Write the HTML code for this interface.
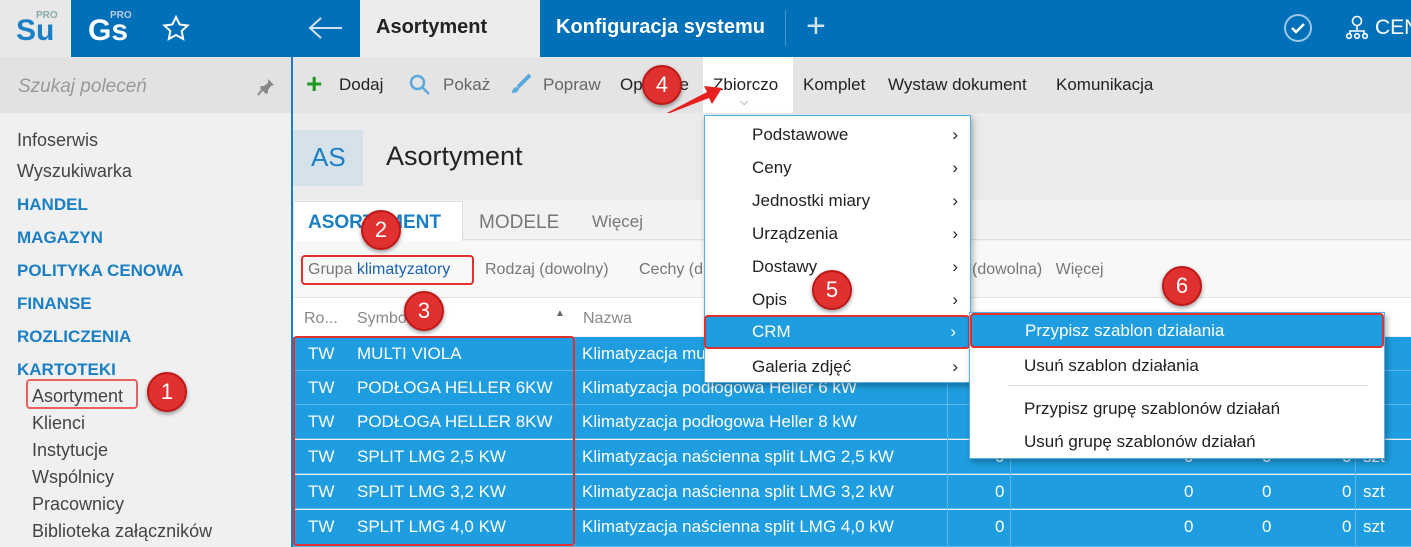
<!DOCTYPE html>
<html><head><meta charset="utf-8"><style>
*{margin:0;padding:0;box-sizing:border-box}
body{width:1411px;height:547px;overflow:hidden;position:relative;font-family:"Liberation Sans",sans-serif;font-size:17px;color:#222;background:#f0f0f0}
.a{position:absolute;white-space:nowrap}
.blue{color:#1a7fc4;font-weight:bold}
.badge{position:absolute;width:40px;height:40px;border-radius:50%;background:#e03030;border:2px solid #c01818;color:#fff;font-size:22px;text-align:center;line-height:36px;box-shadow:0 2px 4px rgba(0,0,0,.4)}
.row{position:absolute;left:293px;width:1118px;height:34px;background:#1e9ee0;border-bottom:1px solid #5bb8ea;color:#fff}
.row span{position:absolute;top:7px}
.mi{position:absolute;left:0;width:100%;height:33px;line-height:33px;padding-left:47px}
.mi i{position:absolute;right:12px;font-style:normal}
</style></head><body>
<div class="a" style="left:0;top:0;width:1411px;height:57px;background:#0070b8"></div>
<div class="a" style="left:0;top:0;width:71px;height:57px;background:#e8e8e8"></div>
<div class="a" style="left:16px;top:14px;font-size:30px;font-weight:bold;color:#1a7fc4">Su</div>
<div class="a" style="left:36px;top:10px;font-size:10px;color:#8aa;font-weight:bold">PRO</div>
<div class="a" style="left:88px;top:14px;font-size:30px;font-weight:bold;color:#fff">Gs</div>
<div class="a" style="left:110px;top:10px;font-size:10px;color:#bcd;font-weight:bold">PRO</div>
<svg class="a" style="left:162px;top:15px" width="28" height="26" viewBox="0 0 28 26"><path d="M14 2l3.6 7.5 8 1-5.9 5.5 1.5 8L14 20l-7.2 4 1.5-8L2.4 10.5l8-1z" fill="none" stroke="#fff" stroke-width="2"/></svg>
<svg class="a" style="left:308px;top:17px" width="36" height="22"><path d="M34 11H3M13 1L2 11l11 10" fill="none" stroke="#cfe3f3" stroke-width="2"/></svg>
<div class="a" style="left:360px;top:0;width:180px;height:57px;background:#ececec"></div>
<div class="a" style="left:376px;top:16px;font-size:20px;font-weight:bold">Asortyment</div>
<div class="a" style="left:556px;top:16px;font-size:20px;font-weight:bold;color:#fff">Konfiguracja systemu</div>
<div class="a" style="left:785px;top:10px;width:1px;height:36px;background:#4f95cc"></div>
<div class="a" style="left:806px;top:7px;font-size:34px;color:#cfe3f3;font-weight:300">+</div>
<svg class="a" style="left:1283px;top:13px" width="30" height="30"><circle cx="15" cy="15" r="13" fill="none" stroke="#9cc6e6" stroke-width="2"/><path d="M9 15l4 4 8-8" fill="none" stroke="#fff" stroke-width="2.5"/></svg>
<svg class="a" style="left:1345px;top:15px" width="24" height="26" fill="none" stroke="#fff" stroke-width="1.6"><circle cx="12" cy="6" r="4.5"/><path d="M12 10.5V15M5 19v-3h14v3"/><circle cx="4" cy="21" r="2.3"/><circle cx="12" cy="21" r="2.3"/><circle cx="20" cy="21" r="2.3"/></svg>
<div class="a" style="left:1375px;top:16px;font-size:21px;color:#fff">CEN</div>
<div class="a" style="left:0;top:57px;width:291px;height:56px;background:#e2e2e2"></div>
<div class="a" style="left:18px;top:76px;font-size:19px;font-style:italic;color:#999">Szukaj poleceń</div>
<svg class="a" style="left:257px;top:78px" width="18" height="18"><path d="M11 1l6 6-3 1-3 4 0 3-2 1-6-6 1-2 3 0 4-3z" fill="#888"/><path d="M5 12l-4 5" stroke="#888" stroke-width="2"/></svg>
<div class="a" style="left:291px;top:57px;width:2px;height:490px;background:#1a7fc4"></div>
<div class="a" style="left:17px;top:125px;line-height:31px;font-size:18px;color:#444">Infoserwis<br>Wyszukiwarka</div>
<div class="a blue" style="left:17px;top:188px;font-size:17px;line-height:33px">HANDEL<br>MAGAZYN<br>POLITYKA CENOWA<br>FINANSE<br>ROZLICZENIA<br>KARTOTEKI</div>
<div class="a" style="left:32px;top:383px;line-height:27px;font-size:18px;color:#444">Asortyment<br>Klienci<br>Instytucje<br>Wspólnicy<br>Pracownicy<br>Biblioteka załączników</div>
<div class="a" style="left:26px;top:379px;width:112px;height:30px;border:2px solid #e86060;border-radius:4px"></div>
<div class="badge" style="left:147px;top:372px">1</div>
<div class="a" style="left:293px;top:57px;width:1118px;height:56px;background:#e4e4e4"></div>
<div class="a" style="left:306px;top:70px;font-size:28px;font-weight:bold;color:#1b9a1b;line-height:28px">+</div>
<div class="a" style="left:339px;top:75px">Dodaj</div>
<svg class="a" style="left:409px;top:74px" width="22" height="22" fill="none" stroke="#5aa8dc" stroke-width="2.5"><circle cx="8.5" cy="8.5" r="6.5"/><path d="M13 13l7 7"/></svg>
<div class="a" style="left:443px;top:75px;color:#666">Pokaż</div>
<svg class="a" style="left:510px;top:73px" width="22" height="22"><path d="M20 2L8 14" stroke="#5aa8dc" stroke-width="4"/><path d="M7 14c-4 0-5 4-5 6 3 0 7-1 7-5z" fill="#5aa8dc"/></svg>
<div class="a" style="left:543px;top:75px;color:#666">Popraw</div>
<div class="a" style="left:620px;top:75px">Operacje</div>
<div class="a" style="left:703px;top:57px;width:90px;height:56px;background:#fff"></div>
<div class="a" style="left:713px;top:75px">Zbiorczo</div>
<div class="a" style="left:740px;top:96px;font-size:11px;color:#666">⌵</div>
<div class="a" style="left:803px;top:75px">Komplet</div>
<div class="a" style="left:888px;top:75px">Wystaw dokument</div>
<div class="a" style="left:1056px;top:75px">Komunikacja</div>
<svg class="a" style="left:655px;top:80px" width="70" height="40"><path d="M2 38L52 12l-3-6 18 2-10 16-3-6z" fill="#e82020"/></svg>
<div class="badge" style="left:642px;top:65px">4</div>
<div class="a" style="left:293px;top:113px;width:1118px;height:87px;background:#ebebeb"></div>
<div class="a" style="left:293px;top:130px;width:70px;height:56px;background:#d6e2ea"></div>
<div class="a" style="left:311px;top:142px;font-size:26px;color:#1a7fc4">AS</div>
<div class="a" style="left:386px;top:141px;font-size:27px">Asortyment</div>
<div class="a" style="left:293px;top:200px;width:1118px;height:40px;background:#f2f2f2;border-bottom:1px solid #ddd"></div>
<div class="a" style="left:293px;top:201px;width:170px;height:40px;background:#fff;border:1px solid #ddd;border-bottom:none"></div>
<div class="a" style="left:308px;top:212px;font-size:19px;font-weight:bold;color:#1a7fc4">ASORTYMENT</div>
<div class="a" style="left:479px;top:212px;font-size:19px;color:#777">MODELE</div>
<div class="a" style="left:592px;top:212px;color:#777">Więcej</div>
<div class="a" style="left:293px;top:241px;width:1118px;height:57px;background:#f8f8f8;border-bottom:1px solid #e4e4e4"></div>
<div class="a" style="left:301px;top:255px;width:173px;height:30px;border:2px solid #e03030;border-radius:4px"></div>
<div class="a" style="left:308px;top:261px;font-size:16px;color:#777">Grupa <span style="color:#1a62b0">klimatyzatory</span></div>
<div class="a" style="left:485px;top:261px;font-size:16px;color:#777">Rodzaj (dowolny)</div>
<div class="a" style="left:639px;top:261px;font-size:16px;color:#777">Cechy (d</div>
<div class="a" style="left:972px;top:261px;font-size:16px;color:#777">(dowolna)&nbsp;&nbsp;&nbsp;Więcej</div>
<div class="badge" style="left:361px;top:210px">2</div>
<div class="a" style="left:293px;top:298px;width:1118px;height:38px;background:#fff"></div>
<div class="a" style="left:304px;top:310px;font-size:16px;color:#888">Ro...</div>
<div class="a" style="left:357px;top:310px;font-size:16px;color:#888">Symbol</div>
<div class="a" style="left:555px;top:308px;font-size:10px;color:#666">▲</div>
<div class="a" style="left:583px;top:310px;font-size:16px;color:#888">Nazwa</div>
<div class="badge" style="left:404px;top:291px">3</div>
<div class="row" style="top:337px"><span style="left:15px">TW</span><span style="left:64px">MULTI VIOLA</span><span style="left:289px">Klimatyzacja multi</span></div>
<div class="row" style="top:371px"><span style="left:15px">TW</span><span style="left:64px">PODŁOGA HELLER 6KW</span><span style="left:289px">Klimatyzacja podłogowa Heller 6 kW</span></div>
<div class="row" style="top:405px"><span style="left:15px">TW</span><span style="left:64px">PODŁOGA HELLER 8KW</span><span style="left:289px">Klimatyzacja podłogowa Heller 8 kW</span></div>
<div class="row" style="top:440px"><span style="left:15px">TW</span><span style="left:64px">SPLIT LMG 2,5 KW</span><span style="left:289px">Klimatyzacja naścienna split LMG 2,5 kW</span><span style="left:702px">0</span><span style="left:891px">0</span><span style="left:969px">0</span><span style="left:1049px">0</span><span style="left:1070px">szt</span></div>
<div class="row" style="top:475px"><span style="left:15px">TW</span><span style="left:64px">SPLIT LMG 3,2 KW</span><span style="left:289px">Klimatyzacja naścienna split LMG 3,2 kW</span><span style="left:702px">0</span><span style="left:891px">0</span><span style="left:969px">0</span><span style="left:1049px">0</span><span style="left:1070px">szt</span></div>
<div class="row" style="top:510px;height:37px"><span style="left:15px">TW</span><span style="left:64px">SPLIT LMG 4,0 KW</span><span style="left:289px">Klimatyzacja naścienna split LMG 4,0 kW</span><span style="left:702px">0</span><span style="left:891px">0</span><span style="left:969px">0</span><span style="left:1049px">0</span><span style="left:1070px">szt</span></div>
<div class="a" style="left:574px;top:337px;width:1px;height:210px;background:#5bb8ea"></div>
<div class="a" style="left:947px;top:337px;width:1px;height:210px;background:#5bb8ea"></div>
<div class="a" style="left:1010px;top:337px;width:1px;height:210px;background:#5bb8ea"></div>
<div class="a" style="left:1355px;top:337px;width:1px;height:210px;background:#5bb8ea"></div>
<div class="a" style="left:293px;top:336px;width:282px;height:210px;border:2px solid #e03030;border-radius:4px"></div>
<div class="a" style="left:704px;top:115px;width:267px;height:268px;background:#fff;border:1px solid #5aaee0;box-shadow:2px 3px 6px rgba(0,0,0,.3)">
<div class="mi" style="top:2px">Podstawowe<i>›</i></div>
<div class="mi" style="top:35px">Ceny<i>›</i></div>
<div class="mi" style="top:68px">Jednostki miary<i>›</i></div>
<div class="mi" style="top:101px">Urządzenia<i>›</i></div>
<div class="mi" style="top:134px">Dostawy<i>›</i></div>
<div class="mi" style="top:167px">Opis<i>›</i></div>
<div class="mi" style="top:199px;background:#1e9ee0;color:#fff;border:2px solid #e03030;border-radius:4px;left:-1px;width:266px;height:34px;line-height:30px;padding-left:46px">CRM<i>›</i></div>
<div class="mi" style="top:234px">Galeria zdjęć<i>›</i></div>
</div>
<div class="badge" style="left:812px;top:270px">5</div>
<div class="a" style="left:969px;top:312px;width:416px;height:147px;background:#fff;border:1px solid #5aaee0;box-shadow:2px 3px 6px rgba(0,0,0,.3)">
<div class="mi" style="top:0;background:#1e9ee0;color:#fff;border:2px solid #e03030;border-radius:4px;height:35px;line-height:31px;padding-left:53px">Przypisz szablon działania</div>
<div class="mi" style="top:36px;padding-left:54px">Usuń szablon działania</div>
<div class="a" style="left:38px;top:72px;width:360px;height:1px;background:#ddd"></div>
<div class="mi" style="top:79px;padding-left:54px">Przypisz grupę szablonów działań</div>
<div class="mi" style="top:112px;padding-left:54px">Usuń grupę szablonów działań</div>
</div>
<div class="badge" style="left:1162px;top:266px">6</div>
</body></html>
